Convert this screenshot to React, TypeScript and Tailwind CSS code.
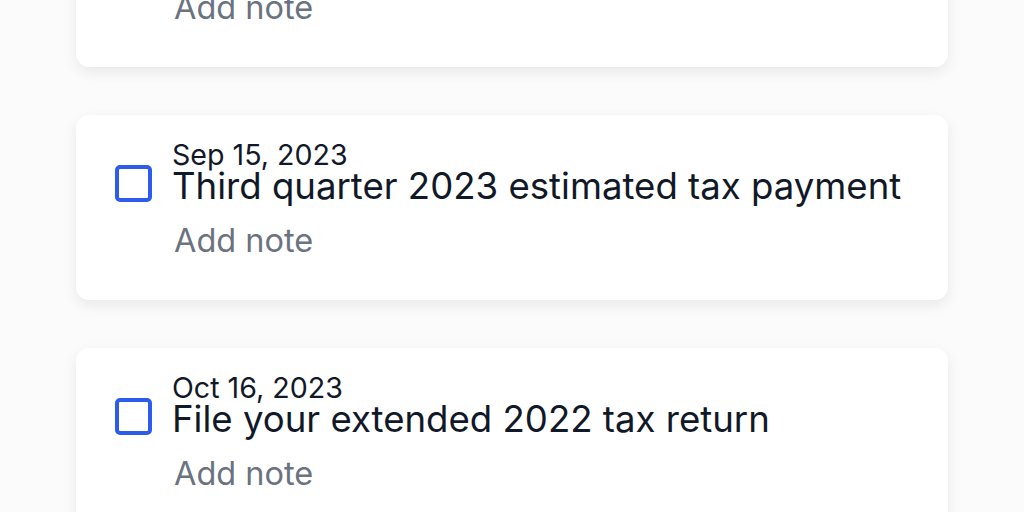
import React from 'react';

type Task = {
  date: string;
  title: string;
};

const tasks: Task[] = [
  { date: 'Jun 15, 2023', title: 'Second quarter 2023 estimated tax payment' },
  { date: 'Sep 15, 2023', title: 'Third quarter 2023 estimated tax payment' },
  { date: 'Oct 16, 2023', title: 'File your extended 2022 tax return' },
];

const TaskCard = ({ task }: { task: Task }) => {
  return (
    <div className="bg-white rounded-[13px] shadow-[0_5px_14px_rgba(0,0,0,0.08)] pl-[39px] pr-6 pt-[29px] pb-[39px]">
      <div className="pl-[57px] text-[28.6px] leading-[21px] text-[#111827] whitespace-nowrap">
        {task.date}
      </div>
      <div className="flex items-start gap-5">
        <div className="w-[37px] h-[37px] shrink-0 rounded-[5px] border-[4px] border-[#2d5cec] bg-white"></div>
        <div className="mt-[4px] text-[36.6px] leading-[35px] text-[#111827] whitespace-nowrap">
          {task.title}
        </div>
      </div>
      <div className="pl-[59px] mt-[17px] text-[32.5px] leading-[40px] text-[#6b7280] whitespace-nowrap">
        Add note
      </div>
    </div>
  );
};

const App = () => {
  return (
    <div
      className="w-[1024px] h-[512px] overflow-hidden bg-[#fbfbfb] px-[76px]"
      style={{ fontFamily: 'Inter, "Noto Sans", sans-serif' }}
    >
      <div className="-mt-[118px] flex flex-col gap-12">
        {tasks.map((task) => (
          <TaskCard key={task.date} task={task} />
        ))}
      </div>
    </div>
  );
};

export default App;
